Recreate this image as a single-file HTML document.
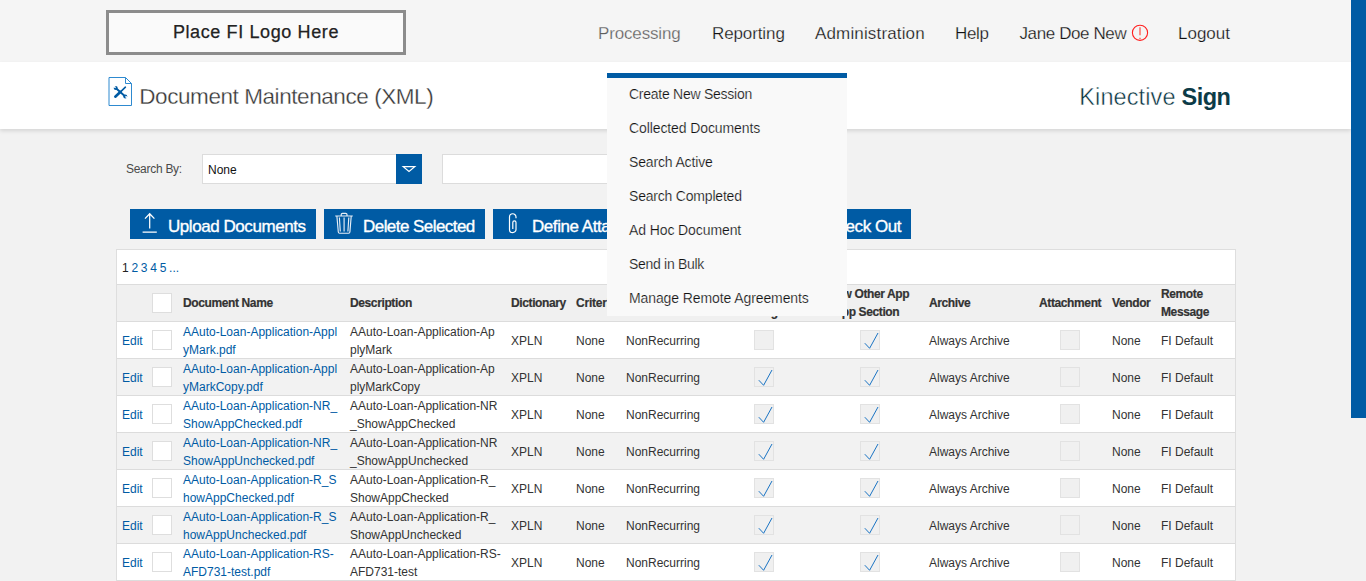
<!DOCTYPE html>
<html lang="en">
<head>
<meta charset="utf-8">
<title>Document Maintenance (XML)</title>
<style>
*{box-sizing:border-box;margin:0;padding:0}
html,body{width:1366px;height:581px;overflow:hidden;background:#f2f2f2;font-family:"Liberation Sans",sans-serif;color:#333}
a{text-decoration:none;color:#005ba4}
.abs{position:absolute}
#hdr{position:absolute;left:0;top:0;width:1351px;height:62px;background:#f5f5f5}
#logo{position:absolute;left:106px;top:10px;width:300px;height:45px;border:3px solid #8c8c8c;background:#fafafa;text-align:center;font-size:18px;line-height:38px;color:#222;font-weight:normal;letter-spacing:.62px;-webkit-text-stroke:.25px #222}
.nav{-webkit-text-stroke:.25px #f5f5f5;position:absolute;top:24px;font-size:17px;line-height:20px;color:#111;white-space:nowrap}
#band{position:absolute;left:0;top:62px;width:1351px;height:67px;background:#fff;box-shadow:0 2px 4px rgba(0,0,0,.12)}
#title{-webkit-text-stroke:.3px #fff;position:absolute;left:139.3px;top:83px;font-size:22.5px;line-height:28px;letter-spacing:-.43px;color:#363636;white-space:nowrap}
#brand span,#brand b{position:absolute;top:83px;font-size:23.5px;line-height:28px;color:#0c3b47;white-space:nowrap}
#brand span{-webkit-text-stroke:.45px #fff;left:1079.3px;letter-spacing:.1px;color:#06323e}
#brand b{left:1181.5px;font-weight:bold;letter-spacing:-.5px}
#sb{position:absolute;left:1351px;top:0;width:15px;height:418px;background:#005ba4}
#menu{position:absolute;left:607px;top:73px;width:240px;height:243px;background:#f9f9f9;border-top:5px solid #005ba4;z-index:10}
#menu div{-webkit-text-stroke:.2px #f9f9f9;position:absolute;left:22px;font-size:14px;line-height:16px;color:#111;white-space:nowrap}

#sblbl{position:absolute;left:126px;top:161px;letter-spacing:-.28px;font-size:12px;line-height:16px;color:#4a4a4a;white-space:nowrap}
#sel{position:absolute;left:202px;top:154px;width:220px;height:30px;background:#fff;border:1px solid #dcdcdc}
#sel span{position:absolute;left:5px;top:7px;font-size:12px;line-height:16px;color:#111}
#sel i{position:absolute;right:-1px;top:-1px;width:26px;height:30px;background:#005ba4}
#inp{position:absolute;left:442px;top:154px;width:220px;height:30px;background:#fff;border:1px solid #dcdcdc}
.btn{position:absolute;top:209px;height:30px;background:#005ba4;color:#fff;font-size:17px;line-height:20px;white-space:nowrap}
.btn span{position:absolute;top:8px;letter-spacing:-.44px;-webkit-text-stroke:.35px #fff}
.btn svg{position:absolute}
#panel{position:absolute;left:116px;top:249px;width:1120px;height:340px;background:#fff;border:1px solid #dedede}
#pager{position:absolute;left:122px;top:260px;font-size:12px;word-spacing:-.6px;line-height:16px;color:#222;white-space:nowrap}
#thead{position:absolute;left:117px;top:284px;width:1118px;height:38px;background:#f0f0f0;border-top:1px solid #dcdcdc;border-bottom:1px solid #dcdcdc}
.th{-webkit-text-stroke:.2px #333;position:absolute;font-size:12px;line-height:18px;font-weight:bold;color:#333;white-space:nowrap;letter-spacing:-.38px}
.row{position:absolute;left:117px;width:1118px;height:37px;border-bottom:1px solid #dcdcdc;font-size:12px;line-height:17px;color:#333}
.row.alt{background:#f2f2f2}
.row span,.row a{position:absolute;white-space:nowrap}
.cb{position:absolute;width:20px;height:20px;background:#fff;border:1px solid #dedede}
.cb.d{background:#f0f0f0;border-color:#e2e2e2}
</style>
</head>
<body>
<div id="hdr"></div>
<div id="logo">Place FI Logo Here</div>
<div class="nav" style="left:598px;color:#5e5e5e;letter-spacing:-.15px">Processing</div>
<div class="nav" style="left:712px;letter-spacing:-.11px">Reporting</div>
<div class="nav" style="left:815px;letter-spacing:.15px">Administration</div>
<div class="nav" style="left:955px;letter-spacing:-.37px">Help</div>
<div class="nav" style="left:1019.5px;letter-spacing:-.39px">Jane Doe New</div>
<div class="nav" style="left:1178px">Logout</div>
<div id="band"></div>
<div id="title">Document Maintenance (XML)</div>
<div id="brand"><span>Kinective</span> <b>Sign</b></div>

<div id="sblbl">Search By:</div>
<div id="sel"><span>None</span><i><svg width="26" height="30" viewBox="0 0 26 30"><path d="M7.2 12.6 H18.8 L13 17.4 Z" fill="none" stroke="#fff" stroke-width="1.2"/></svg></i></div>
<div id="inp"></div>
<div class="btn" style="left:130px;width:186px"><span style="left:38px">Upload Documents</span></div>
<div class="btn" style="left:324px;width:161px"><span style="left:39px;letter-spacing:-.55px">Delete Selected</span></div>
<div class="btn" style="left:493px;width:200px"><span style="left:39px">Define Attachments</span></div>
<div class="btn" style="left:701px;width:210px"><span style="left:45.5px">Document Check Out</span></div>
<div id="panel"></div>
<div id="pager">1 <a>2</a> <a>3</a> <a>4</a> <a>5</a> <a>...</a></div>
<div id="thead"></div>
<div class="cb" style="left:152px;top:293px"></div>
<div class="th" style="left:183px;top:294px">Document Name</div>
<div class="th" style="left:350px;top:294px">Description</div>
<div class="th" style="left:511px;top:294px">Dictionary</div>
<div class="th" style="left:576px;top:294px;letter-spacing:-.2px">Criteria</div>
<div class="th" style="left:626px;top:294px">Recurrence</div>
<div class="th" style="left:731.5px;top:285px">Allow<br>Indexing</div>
<div class="th" style="left:821px;top:285px">Show Other App<br>in App Section</div>
<div class="th" style="left:929px;top:294px">Archive</div>
<div class="th" style="left:1039px;top:294px">Attachment</div>
<div class="th" style="left:1112px;top:294px">Vendor</div>
<div class="th" style="left:1161px;top:285px">Remote<br>Message</div>
<div class="row" style="top:322px">
<a style="left:5px;top:11px">Edit</a><i class="cb" style="left:35px;top:8px"></i>
<a style="left:66px;top:2px">AAuto-Loan-Application-Appl</a><a style="left:66px;top:20px">yMark.pdf</a>
<span style="left:233px;top:2px">AAuto-Loan-Application-Ap</span><span style="left:233px;top:20px">plyMark</span>
<span style="left:394px;top:11px">XPLN</span><span style="left:459px;top:11px">None</span><span style="left:509px;top:11px">NonRecurring</span>
<i class="cb d" style="left:637px;top:8px"></i><i class="cb d" style="left:743px;top:8px"><svg width="20" height="20" viewBox="0 0 20 20" style="position:absolute;left:-1px;top:-1px"><path d="M4.8 13.2 L9.6 18.3 L18 3" fill="none" stroke="#1a74c4" stroke-width="1"/></svg></i>
<span style="left:812px;top:11px">Always Archive</span><i class="cb d" style="left:943px;top:8px"></i>
<span style="left:995px;top:11px">None</span><span style="left:1044px;top:11px">FI Default</span>
</div>
<div class="row alt" style="top:359px">
<a style="left:5px;top:11px">Edit</a><i class="cb" style="left:35px;top:8px"></i>
<a style="left:66px;top:2px">AAuto-Loan-Application-Appl</a><a style="left:66px;top:20px">yMarkCopy.pdf</a>
<span style="left:233px;top:2px">AAuto-Loan-Application-Ap</span><span style="left:233px;top:20px">plyMarkCopy</span>
<span style="left:394px;top:11px">XPLN</span><span style="left:459px;top:11px">None</span><span style="left:509px;top:11px">NonRecurring</span>
<i class="cb d" style="left:637px;top:8px"><svg width="20" height="20" viewBox="0 0 20 20" style="position:absolute;left:-1px;top:-1px"><path d="M4.8 13.2 L9.6 18.3 L18 3" fill="none" stroke="#1a74c4" stroke-width="1"/></svg></i><i class="cb d" style="left:743px;top:8px"><svg width="20" height="20" viewBox="0 0 20 20" style="position:absolute;left:-1px;top:-1px"><path d="M4.8 13.2 L9.6 18.3 L18 3" fill="none" stroke="#1a74c4" stroke-width="1"/></svg></i>
<span style="left:812px;top:11px">Always Archive</span><i class="cb d" style="left:943px;top:8px"></i>
<span style="left:995px;top:11px">None</span><span style="left:1044px;top:11px">FI Default</span>
</div>
<div class="row" style="top:396px">
<a style="left:5px;top:11px">Edit</a><i class="cb" style="left:35px;top:8px"></i>
<a style="left:66px;top:2px">AAuto-Loan-Application-NR_</a><a style="left:66px;top:20px">ShowAppChecked.pdf</a>
<span style="left:233px;top:2px">AAuto-Loan-Application-NR</span><span style="left:233px;top:20px">_ShowAppChecked</span>
<span style="left:394px;top:11px">XPLN</span><span style="left:459px;top:11px">None</span><span style="left:509px;top:11px">NonRecurring</span>
<i class="cb d" style="left:637px;top:8px"><svg width="20" height="20" viewBox="0 0 20 20" style="position:absolute;left:-1px;top:-1px"><path d="M4.8 13.2 L9.6 18.3 L18 3" fill="none" stroke="#1a74c4" stroke-width="1"/></svg></i><i class="cb d" style="left:743px;top:8px"><svg width="20" height="20" viewBox="0 0 20 20" style="position:absolute;left:-1px;top:-1px"><path d="M4.8 13.2 L9.6 18.3 L18 3" fill="none" stroke="#1a74c4" stroke-width="1"/></svg></i>
<span style="left:812px;top:11px">Always Archive</span><i class="cb d" style="left:943px;top:8px"></i>
<span style="left:995px;top:11px">None</span><span style="left:1044px;top:11px">FI Default</span>
</div>
<div class="row alt" style="top:433px">
<a style="left:5px;top:11px">Edit</a><i class="cb" style="left:35px;top:8px"></i>
<a style="left:66px;top:2px">AAuto-Loan-Application-NR_</a><a style="left:66px;top:20px">ShowAppUnchecked.pdf</a>
<span style="left:233px;top:2px">AAuto-Loan-Application-NR</span><span style="left:233px;top:20px">_ShowAppUnchecked</span>
<span style="left:394px;top:11px">XPLN</span><span style="left:459px;top:11px">None</span><span style="left:509px;top:11px">NonRecurring</span>
<i class="cb d" style="left:637px;top:8px"><svg width="20" height="20" viewBox="0 0 20 20" style="position:absolute;left:-1px;top:-1px"><path d="M4.8 13.2 L9.6 18.3 L18 3" fill="none" stroke="#1a74c4" stroke-width="1"/></svg></i><i class="cb d" style="left:743px;top:8px"><svg width="20" height="20" viewBox="0 0 20 20" style="position:absolute;left:-1px;top:-1px"><path d="M4.8 13.2 L9.6 18.3 L18 3" fill="none" stroke="#1a74c4" stroke-width="1"/></svg></i>
<span style="left:812px;top:11px">Always Archive</span><i class="cb d" style="left:943px;top:8px"></i>
<span style="left:995px;top:11px">None</span><span style="left:1044px;top:11px">FI Default</span>
</div>
<div class="row" style="top:470px">
<a style="left:5px;top:11px">Edit</a><i class="cb" style="left:35px;top:8px"></i>
<a style="left:66px;top:2px">AAuto-Loan-Application-R_S</a><a style="left:66px;top:20px">howAppChecked.pdf</a>
<span style="left:233px;top:2px">AAuto-Loan-Application-R_</span><span style="left:233px;top:20px">ShowAppChecked</span>
<span style="left:394px;top:11px">XPLN</span><span style="left:459px;top:11px">None</span><span style="left:509px;top:11px">NonRecurring</span>
<i class="cb d" style="left:637px;top:8px"><svg width="20" height="20" viewBox="0 0 20 20" style="position:absolute;left:-1px;top:-1px"><path d="M4.8 13.2 L9.6 18.3 L18 3" fill="none" stroke="#1a74c4" stroke-width="1"/></svg></i><i class="cb d" style="left:743px;top:8px"><svg width="20" height="20" viewBox="0 0 20 20" style="position:absolute;left:-1px;top:-1px"><path d="M4.8 13.2 L9.6 18.3 L18 3" fill="none" stroke="#1a74c4" stroke-width="1"/></svg></i>
<span style="left:812px;top:11px">Always Archive</span><i class="cb d" style="left:943px;top:8px"></i>
<span style="left:995px;top:11px">None</span><span style="left:1044px;top:11px">FI Default</span>
</div>
<div class="row alt" style="top:507px">
<a style="left:5px;top:11px">Edit</a><i class="cb" style="left:35px;top:8px"></i>
<a style="left:66px;top:2px">AAuto-Loan-Application-R_S</a><a style="left:66px;top:20px">howAppUnchecked.pdf</a>
<span style="left:233px;top:2px">AAuto-Loan-Application-R_</span><span style="left:233px;top:20px">ShowAppUnchecked</span>
<span style="left:394px;top:11px">XPLN</span><span style="left:459px;top:11px">None</span><span style="left:509px;top:11px">NonRecurring</span>
<i class="cb d" style="left:637px;top:8px"><svg width="20" height="20" viewBox="0 0 20 20" style="position:absolute;left:-1px;top:-1px"><path d="M4.8 13.2 L9.6 18.3 L18 3" fill="none" stroke="#1a74c4" stroke-width="1"/></svg></i><i class="cb d" style="left:743px;top:8px"><svg width="20" height="20" viewBox="0 0 20 20" style="position:absolute;left:-1px;top:-1px"><path d="M4.8 13.2 L9.6 18.3 L18 3" fill="none" stroke="#1a74c4" stroke-width="1"/></svg></i>
<span style="left:812px;top:11px">Always Archive</span><i class="cb d" style="left:943px;top:8px"></i>
<span style="left:995px;top:11px">None</span><span style="left:1044px;top:11px">FI Default</span>
</div>
<div class="row" style="top:544px">
<a style="left:5px;top:11px">Edit</a><i class="cb" style="left:35px;top:8px"></i>
<a style="left:66px;top:2px">AAuto-Loan-Application-RS-</a><a style="left:66px;top:20px">AFD731-test.pdf</a>
<span style="left:233px;top:2px">AAuto-Loan-Application-RS-</span><span style="left:233px;top:20px">AFD731-test</span>
<span style="left:394px;top:11px">XPLN</span><span style="left:459px;top:11px">None</span><span style="left:509px;top:11px">NonRecurring</span>
<i class="cb d" style="left:637px;top:8px"><svg width="20" height="20" viewBox="0 0 20 20" style="position:absolute;left:-1px;top:-1px"><path d="M4.8 13.2 L9.6 18.3 L18 3" fill="none" stroke="#1a74c4" stroke-width="1"/></svg></i><i class="cb d" style="left:743px;top:8px"><svg width="20" height="20" viewBox="0 0 20 20" style="position:absolute;left:-1px;top:-1px"><path d="M4.8 13.2 L9.6 18.3 L18 3" fill="none" stroke="#1a74c4" stroke-width="1"/></svg></i>
<span style="left:812px;top:11px">Always Archive</span><i class="cb d" style="left:943px;top:8px"></i>
<span style="left:995px;top:11px">None</span><span style="left:1044px;top:11px">FI Default</span>
</div>

<svg class="abs" style="left:0;top:0;z-index:5" width="1351" height="260" viewBox="0 0 1351 260" fill="none">
<!-- exclamation -->
<circle cx="1140" cy="32.8" r="7.6" stroke="#ff1f1f" stroke-width="1.1"/>
<path d="M1140 27.2 V35.2 M1140 37.8 V38.9" stroke="#ff3b2f" stroke-width="1.1"/>
<!-- doc icon -->
<path d="M109 77.5 H125.5 L131.5 83.5 V105.5 H109 Z M125.5 77.5 V83.5 H131.5" stroke="#2e8ad0" stroke-width="1" fill="#fff"/>
<path d="M116 88.2 L125 96.2" stroke="#005ba4" stroke-width="1.9" stroke-linecap="round"/>
<circle cx="115.7" cy="87.9" r="2" fill="#005ba4"/><circle cx="125.3" cy="96.5" r="2" fill="#005ba4"/>
<path d="M113.6 86.4 L115.6 87.7" stroke="#fff" stroke-width="1.5"/><path d="M127.6 97.6 L125.4 96.5" stroke="#fff" stroke-width="1.5"/>
<path d="M125.4 87.2 L120.5 91.8" stroke="#005ba4" stroke-width="1.6" stroke-linecap="round"/>
<path d="M120.5 91.8 L115.3 96.7" stroke="#005ba4" stroke-width="2.6" stroke-linecap="round"/>
<!-- upload -->
<path d="M149.7 213.6 V228.4 M145 218.6 L149.7 213.7 L154.4 218.6 M142.6 232.1 H156.8" stroke="#fff" stroke-width="1.25"/>
<!-- trash -->
<path d="M335.2 216 H352.8 M341.2 216 V214.6 Q341.2 213.3 342.5 213.3 H345.7 Q347 213.3 347 214.6 V216 M336.9 216.3 L338.3 232 Q338.4 233.2 339.6 233.2 H348.6 Q349.8 233.2 349.9 232 L351.2 216.3 M339.4 217.5 L340.3 231.5 M344.1 217.5 V231.5 M348.8 217.5 L347.9 231.5" stroke="#e6eef6" stroke-width="1.15"/>
<!-- paperclip -->
<path d="M516 218.3 V217 A3.25 3.25 0 0 0 509.5 217 V229.4 A3.25 3.25 0 0 0 516 229.4 V222.4 A1.6 1.6 0 0 0 512.8 222.4 V229" stroke="#fff" stroke-width="1.2"/>
</svg>
<div id="sb"></div>
<div id="menu">
<div style="top:8px;letter-spacing:-0.26px">Create New Session</div>
<div style="top:42px;letter-spacing:-0.1px">Collected Documents</div>
<div style="top:76px;letter-spacing:-0.15px">Search Active</div>
<div style="top:110px;letter-spacing:-0.2px">Search Completed</div>
<div style="top:144px;letter-spacing:-0.1px">Ad Hoc Document</div>
<div style="top:178px;letter-spacing:-0.3px">Send in Bulk</div>
<div style="top:212px;letter-spacing:-0.1px">Manage Remote Agreements</div>
</div>
</body>
</html>
